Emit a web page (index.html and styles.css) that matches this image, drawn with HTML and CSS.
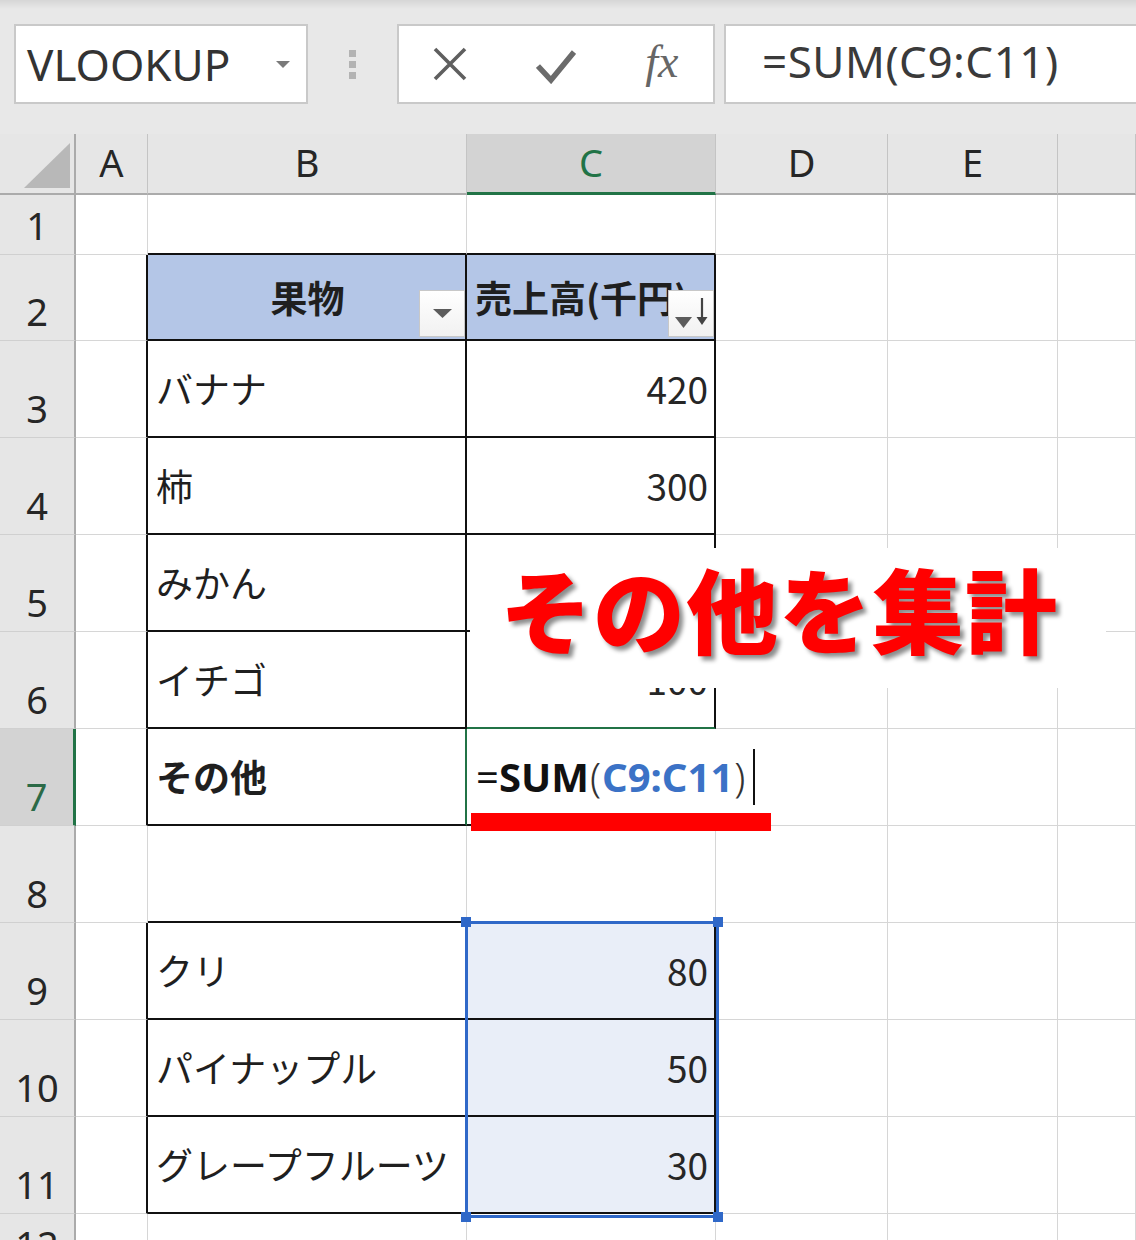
FILE: index.html
```html
<!DOCTYPE html>
<html lang="ja">
<head>
<meta charset="utf-8">
<title>Excel SUM</title>
<link rel="stylesheet" href="styles.css">
</head>
<body>
<div class="page">
  <div class="toolbar">
    <div class="namebox"><span class="nb-text">VLOOKUP</span><span class="nb-arrow"></span></div>
    <div class="grip"><i></i><i></i><i></i></div>
    <div class="fbtns">
      <svg class="ico-x" width="34" height="34" viewBox="0 0 34 34"><path d="M2 2 L32 32 M32 2 L2 32" stroke="#5f5f5f" stroke-width="3.6" fill="none"/></svg>
      <svg class="ico-check" width="40" height="36" viewBox="0 0 40 36"><path d="M2 18 L15 32 L38 4" stroke="#6b6b6b" stroke-width="5.5" fill="none"/></svg>
      <span class="fx">fx</span>
    </div>
    <div class="fbar">=SUM(C9:C11)</div>
  </div>

  <div class="sheet">
    <!-- header row -->
    <div class="corner"><svg width="76" height="61" viewBox="0 0 76 61"><polygon points="24,54 70,54 70,9" fill="#b8b8b8"/></svg></div>
    <div class="ch">A</div>
    <div class="ch">B</div>
    <div class="ch ch-sel">C</div>
    <div class="ch">D</div>
    <div class="ch">E</div>
    <div class="ch"></div>

    <!-- row 1 -->
    <div class="rh">1</div>
    <div class="c"></div>
    <div class="c bb"></div>
    <div class="c bb"></div>
    <div class="c"></div>
    <div class="c"></div>
    <div class="c"></div>

    <!-- row 2 -->
    <div class="rh">2</div>
    <div class="c br"></div>
    <div class="c hd bb br center">果物
      <span class="fbtn"><svg width="44" height="45" viewBox="0 0 44 45"><polygon points="13,18 32,18 22.5,27" fill="#5c5c5c"/></svg></span>
    </div>
    <div class="c hd bb br">売上高(千円)
      <span class="fbtn"><svg width="44" height="45" viewBox="0 0 44 45"><polygon points="6,26 23,26 14.5,37" fill="#5c5c5c"/><path d="M33 7 V31" stroke="#444" stroke-width="2.2"/><polygon points="27.5,26 38.5,26 33,34" fill="#444"/></svg></span>
    </div>
    <div class="c"></div>
    <div class="c"></div>
    <div class="c"></div>

    <!-- row 3 -->
    <div class="rh">3</div>
    <div class="c br"></div>
    <div class="c bb br">バナナ</div>
    <div class="c bb br num">420</div>
    <div class="c"></div>
    <div class="c"></div>
    <div class="c"></div>

    <!-- row 4 -->
    <div class="rh">4</div>
    <div class="c br"></div>
    <div class="c bb br">柿</div>
    <div class="c bb br num">300</div>
    <div class="c"></div>
    <div class="c"></div>
    <div class="c"></div>

    <!-- row 5 -->
    <div class="rh">5</div>
    <div class="c br"></div>
    <div class="c bb br">みかん</div>
    <div class="c bb br num"></div>
    <div class="c"></div>
    <div class="c"></div>
    <div class="c"></div>

    <!-- row 6 -->
    <div class="rh">6</div>
    <div class="c br"></div>
    <div class="c bb br">イチゴ</div>
    <div class="c bg-green br num">100</div>
    <div class="c"></div>
    <div class="c"></div>
    <div class="c"></div>

    <!-- row 7 -->
    <div class="rh rh-sel">7</div>
    <div class="c br"></div>
    <div class="c bb br-green bold">その他</div>
    <div class="c bb edit"><span class="f-eq">=</span><span class="f-fn">SUM</span><span class="f-par">(</span><span class="f-ref">C9:C11</span><span class="f-par">)</span><span class="caret"></span></div>
    <div class="c"></div>
    <div class="c"></div>
    <div class="c"></div>

    <!-- row 8 -->
    <div class="rh">8</div>
    <div class="c"></div>
    <div class="c bb"></div>
    <div class="c bb"></div>
    <div class="c"></div>
    <div class="c"></div>
    <div class="c"></div>

    <!-- row 9 -->
    <div class="rh">9</div>
    <div class="c br"></div>
    <div class="c bb br">クリ</div>
    <div class="c bb br num selfill">80</div>
    <div class="c"></div>
    <div class="c"></div>
    <div class="c"></div>

    <!-- row 10 -->
    <div class="rh">10</div>
    <div class="c br"></div>
    <div class="c bb br">パイナップル</div>
    <div class="c bb br num selfill">50</div>
    <div class="c"></div>
    <div class="c"></div>
    <div class="c"></div>

    <!-- row 11 -->
    <div class="rh">11</div>
    <div class="c br"></div>
    <div class="c bb br">グレープフルーツ</div>
    <div class="c bb br num selfill">30</div>
    <div class="c"></div>
    <div class="c"></div>
    <div class="c"></div>

    <!-- row 12 -->
    <div class="rh">12</div>
    <div class="c"></div>
    <div class="c"></div>
    <div class="c"></div>
    <div class="c"></div>
    <div class="c"></div>
    <div class="c"></div>
  </div>

  <div class="selection">
    <i class="hdl tl"></i><i class="hdl tr"></i><i class="hdl bl"></i><i class="hdl br2"></i>
  </div>
  <div class="callout">その他を集計</div>
  <div class="underline"></div>
</div>
</body>
</html>
```

FILE: styles.css
```css
* { box-sizing: border-box; }
html, body { margin: 0; padding: 0; }
body {
  width: 1136px;
  height: 1240px;
  overflow: hidden;
  background: #fff;
}
.page {
  position: relative;
  width: 1136px;
  height: 1240px;
  overflow: hidden;
  font-family: "Noto Sans CJK JP", "Noto Sans", sans-serif;
  color: #1f1f1f;
}

/* ---------- toolbar ---------- */
.toolbar {
  height: 134px;
  background: linear-gradient(#d6d6d6 0, #e8e8e8 9px, #e8e8e8 100%);
  display: flex;
  align-items: flex-start;
  padding: 24px 0 0 14px;
  overflow: hidden;
}
.namebox {
  width: 294px;
  height: 80px;
  flex-shrink: 0;
  background: #fff;
  border: 2px solid #c9c9c9;
  display: flex;
  align-items: center;
  justify-content: space-between;
  padding: 0 16px 0 11px;
}
.nb-text {
  font-family: "Noto Sans", sans-serif;
  font-size: 44px;
  line-height: 1;
  color: #333;
}
.nb-arrow {
  width: 0;
  height: 0;
  border-left: 7px solid transparent;
  border-right: 7px solid transparent;
  border-top: 7px solid #7a7a7a;
}
.grip {
  width: 89px;
  height: 80px;
  flex-shrink: 0;
  display: flex;
  flex-direction: column;
  align-items: center;
  justify-content: center;
  gap: 4px;
}
.grip i {
  display: block;
  width: 7px;
  height: 7px;
  background: #b3b3b3;
}
.fbtns {
  width: 318px;
  height: 80px;
  flex-shrink: 0;
  background: #fff;
  border: 2px solid #c9c9c9;
  display: flex;
  align-items: center;
  justify-content: space-around;
}
.ico-check { margin-top: 4px; }
.fx {
  font-family: "Liberation Serif", serif;
  font-style: italic;
  font-size: 46px;
  line-height: 1;
  color: #666;
  margin-bottom: 4px;
}
.fbar {
  width: 440px;
  height: 80px;
  flex-shrink: 0;
  margin-left: 9px;
  background: #fff;
  border: 2px solid #c9c9c9;
  border-right: none;
  display: flex;
  align-items: center;
  padding-left: 36px;
  font-family: "Noto Sans", sans-serif;
  font-size: 44px;
  color: #3a3a3a;
  padding-bottom: 6px;
  letter-spacing: 0.5px;
}

/* ---------- sheet ---------- */
.sheet {
  display: grid;
  grid-template-columns: 76px 72px 319px 249px 172px 170px 78px;
  grid-template-rows: 61px 60px 86px repeat(9, 97px) 60px;
}
.corner {
  background: #e6e6e6;
  border-right: 2px solid #ababab;
  border-bottom: 2px solid #ababab;
}
.corner svg { display: block; }
.ch {
  background: #e6e6e6;
  border-right: 1px solid #c4c4c4;
  border-bottom: 2px solid #ababab;
  display: flex;
  align-items: center;
  justify-content: center;
  padding-bottom: 3px;
  font-family: "Noto Sans", sans-serif;
  font-size: 38px;
  line-height: 1;
  color: #262626;
}
.ch-sel {
  background: #d3d3d3;
  color: #217346;
  border-bottom: 3px solid #217346;
}
.rh {
  background: #e6e6e6;
  border-right: 2px solid #ababab;
  border-bottom: 1px solid #d0d0d0;
  display: flex;
  align-items: flex-end;
  justify-content: center;
  padding-bottom: 10px;
  font-family: "Noto Sans", sans-serif;
  font-size: 38px;
  line-height: 1;
  color: #262626;
}
.rh-sel {
  background: #d3d3d3;
  color: #2b6a47;
  border-right: 3px solid #217346;
}
.c {
  position: relative;
  border-right: 1px solid #d6d6d6;
  border-bottom: 1px solid #d6d6d6;
  display: flex;
  align-items: center;
  padding: 0 6px 0 8px;
  font-size: 37px;
  line-height: 1.2;
  white-space: nowrap;
  color: #1f1f1f;
}
.bb { border-bottom: 2px solid #111; }
.br { border-right: 2px solid #111; }
.br-green { border-right: 2px solid #217346; }
.bg-green { border-bottom: 2px solid #217346; }
.num { justify-content: flex-end; color: #262626; }
.center { justify-content: center; }
.bold { font-weight: 700; }
.hd {
  background: #b4c6e7;
  font-weight: 700;
  overflow: hidden;
  padding-left: 8px;
}
.fbtn {
  position: absolute;
  right: 0;
  bottom: 2px;
  width: 46px;
  height: 47px;
  background: linear-gradient(#ffffff, #f1f1f1);
  border: 1px solid #c8c8c8;
}
.fbtn svg { display: block; }
.selfill { background: #e9eef8; }

/* edit cell */
.edit {
  padding-left: 9px;
  border-right: none;
  font-family: "Noto Sans", sans-serif;
  font-size: 40px;
  line-height: 1;
  font-weight: 700;
  color: #111;
  z-index: 1;
}
.edit > span { flex-shrink: 0; }
.f-eq { font-weight: 400; }
.f-par { font-weight: 300; color: #333; margin: 0 1px; }
.f-ref { color: #3b72c6; }
.caret {
  display: block;
  width: 2px;
  height: 56px;
  background: #111;
  margin-left: 7px;
}

/* ---------- overlays ---------- */
.selection {
  position: absolute;
  left: 465px;
  top: 921px;
  width: 254px;
  height: 297px;
  border: 3px solid #2f68c8;
}
.hdl {
  position: absolute;
  width: 10px;
  height: 10px;
  background: #2f68c8;
}
.hdl.tl { left: -7px; top: -7px; }
.hdl.tr { right: -7px; top: -7px; }
.hdl.bl { left: -7px; bottom: -7px; }
.hdl.br2 { right: -7px; bottom: -7px; }

.callout {
  position: absolute;
  left: 470px;
  top: 548px;
  width: 636px;
  height: 140px;
  background: #fff;
  display: flex;
  align-items: center;
  padding-left: 30px;
  padding-bottom: 22px;
  font-family: "Noto Sans CJK JP", sans-serif;
  font-weight: 900;
  font-size: 92px;
  line-height: 1;
  letter-spacing: 1px;
  color: #ff0000;
  text-shadow: 4px 4px 4px rgba(0, 0, 0, 0.45);
  white-space: nowrap;
  z-index: 2;
}
.underline {
  position: absolute;
  left: 471px;
  top: 813px;
  width: 300px;
  height: 18px;
  background: #ff0000;
  z-index: 2;
}
```
